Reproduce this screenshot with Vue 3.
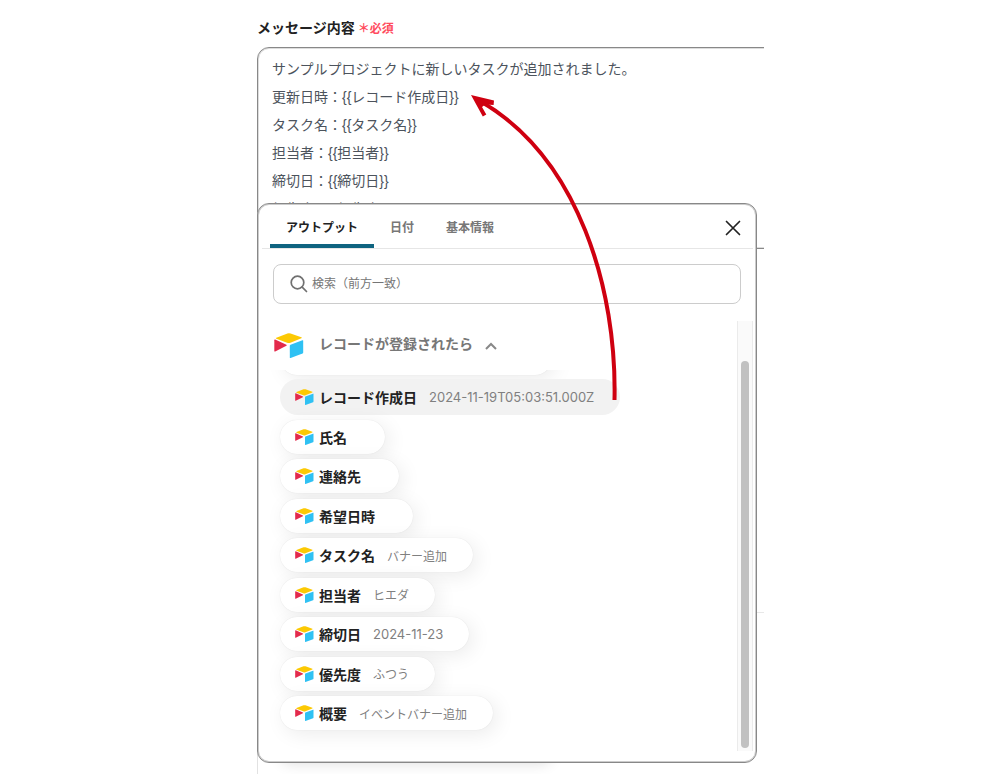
<script setup>
import { ref } from 'vue'

const message = ref(
  [
    'サンプルプロジェクトに新しいタスクが追加されました。',
    '更新日時：{{レコード作成日}}',
    'タスク名：{{タスク名}}',
    '担当者：{{担当者}}',
    '締切日：{{締切日}}',
    '優先度：{{優先度}}',
  ].join('\n'),
)
const keyword = ref('')
const tabs = ['アウトプット', '日付', '基本情報']
const activeTab = ref('アウトプット')
const fields = [
  { name: 'レコード作成日', value: '2024-11-19T05:03:51.000Z', date: true, active: true },
  { name: '氏名', value: '' },
  { name: '連絡先', value: '' },
  { name: '希望日時', value: '' },
  { name: 'タスク名', value: 'バナー追加' },
  { name: '担当者', value: 'ヒエダ' },
  { name: '締切日', value: '2024-11-23', date: true },
  { name: '優先度', value: 'ふつう' },
  { name: '概要', value: 'イベントバナー追加' },
]
</script>

<template>
  <main class="page">
    <svg class="symbols" aria-hidden="true">
      <symbol id="cube" viewBox="0 0 30 25">
        <path fill="#fcc903" d="M13.4.4q1.600-.5 3.200 0L27.300 4.300q1 .5 0 1L16.500 9.800q-1.700.6-3.400 0L2.400 5.700q-1-.5 0-1z" />
        <path fill="#2fc1f3" d="M15.800 12.800q0-.8.700-1.100L28.400 7.200q.800-.2.800.6V19.500q0 .8-.7 1.100L16.600 25q-.800.2-.800-.6z" />
        <path fill="#e32a4c" d="M.3 7.200q0-1 .9-.6L12.400 11.700q.8.500 0 1L1.200 18.500q-.9.400-.9-.6z" />
      </symbol>
    </svg>

    <section class="form">
      <label class="label" for="message">メッセージ内容<span class="required">＊必須</span></label>
      <div class="clip">
        <textarea id="message" v-model="message" class="message"></textarea>
      </div>
      <div class="next" aria-hidden="true">
        <div class="next-top"></div>
        <div class="next-rest"><div class="next-chip"></div></div>
      </div>

      <div class="panel">
        <header class="head">
          <nav class="tabs">
            <button
              v-for="tab in tabs"
              :key="tab"
              type="button"
              class="tab"
              :class="{ current: tab === activeTab }"
              @click="activeTab = tab"
            >{{ tab }}</button>
          </nav>
          <button type="button" class="close" aria-label="閉じる">
            <svg width="16" height="16" viewBox="0 0 16 16" fill="none" stroke="#222" stroke-width="1.700" stroke-linecap="round">
              <path d="M1.500 1.500 14.500 14.500M14.500 1.500 1.500 14.500" />
            </svg>
          </button>
        </header>

        <div class="search">
          <svg width="18" height="18" viewBox="0 0 18 18" fill="none" stroke="#707070" stroke-width="1.700" stroke-linecap="round">
            <circle cx="7.500" cy="7.500" r="6.300" />
            <path d="m12.200 12.200 4.300 4.300" />
          </svg>
          <input v-model="keyword" type="text" placeholder="検索（前方一致）" aria-label="検索（前方一致）" />
        </div>

        <div class="body">
          <div class="group">
            <button type="button" class="group-head">
              <svg class="logo"><use href="#cube" /></svg>
              <span class="group-name">レコードが登録されたら</span>
              <svg class="chevron" width="12" height="8" viewBox="0 0 12 8" fill="none" stroke="#888" stroke-width="2">
                <path d="M1 7 6 2l5 5" />
              </svg>
            </button>
            <div class="scroll">
              <ul class="list">
                <li><div class="chip passed"></div></li>
                <li v-for="field in fields" :key="field.name">
                  <button type="button" class="chip" :class="{ active: field.active }">
                    <svg class="icon"><use href="#cube" /></svg>
                    <span class="name">{{ field.name }}</span>
                    <span class="value" :class="{ date: field.date }">{{ field.value }}</span>
                  </button>
                </li>
              </ul>
            </div>
          </div>
          <div class="track" aria-hidden="true"><div class="thumb"></div></div>
        </div>
      </div>

      <svg class="arrow" width="160" height="320" viewBox="465 90 160 320" aria-hidden="true">
        <path d="M614.500 400C617 290 579 158 480 101" fill="none" stroke="#cf0010" stroke-width="4" />
        <path d="M471 95 494 100.500 493.600 105 485 104.600 482 107 486.300 114.500 482.800 116.500z" fill="#cf0010" />
      </svg>
    </section>
  </main>
</template>

<style>
body {
  margin: 0;
  background: #fff;
}
</style>

<style scoped>
.page {
  box-sizing: border-box;
  min-height: 100vh;
  padding: 0 236px 0 257px;
  display: flex;
  overflow: hidden;
  font-family: 'Liberation Sans', 'Noto Sans CJK JP', sans-serif;
  color: #222;
}
.symbols {
  position: absolute;
  width: 0;
  height: 0;
}
button,
input,
textarea {
  font-family: inherit;
  margin: 0;
}
button {
  border: 0;
  padding: 0;
  background: none;
  color: inherit;
  cursor: pointer;
}
.form {
  position: relative;
  flex: 1;
  min-width: 0;
  display: flex;
  flex-direction: column;
  padding-top: 17px;
}
.label {
  display: flex;
  align-items: center;
  height: 20px;
  margin-bottom: 10px;
  font-size: 14px;
  font-weight: 700;
}
.required {
  margin-left: 3px;
  font-size: 12px;
  color: #ff4c5e;
}
.clip {
  overflow: hidden;
}
.message {
  display: block;
  box-sizing: border-box;
  width: calc(100% + 20px);
  height: 202px;
  padding: 7px 14px;
  border: 1px solid #888;
  border-radius: 12px;
  box-shadow: inset 0 0 0 1px #ddd;
  background: #fff;
  color: #4c535c;
  font-size: 14px;
  line-height: 28px;
  resize: none;
  overflow: hidden;
  outline: 0;
}
.next {
  flex: 1;
  display: flex;
  flex-direction: column;
  margin-top: 18px;
  border-left: 1px solid #e2e2e2;
}
.next-top {
  height: 345px;
  border-bottom: 1px solid #e8e8e8;
}
.next-rest {
  flex: 1;
  display: flex;
  align-items: flex-end;
}
.next-chip {
  width: 272px;
  height: 20px;
  margin: 0 0 14px 22px;
  border-radius: 10px;
  box-shadow: 0 4px 14px rgba(0, 0, 0, 0.12);
}
.panel {
  position: absolute;
  top: 203px;
  left: 0;
  right: 7px;
  border: 1px solid #888;
  border-radius: 12px;
  box-shadow: inset 0 0 0 1px #ccc;
  background: #fff;
}
.head {
  display: flex;
  align-items: center;
  justify-content: space-between;
  height: 44px;
  margin: 0 3px 0 4px;
  padding: 0 8px;
  border-bottom: 1px solid #e6e6e6;
}
.tabs {
  display: flex;
  align-self: stretch;
}
.tab {
  box-sizing: border-box;
  padding: 4px 16px 0;
  border-bottom: 4px solid transparent;
  color: #777;
  font-size: 12px;
  font-weight: 700;
}
.tab.current {
  color: #222;
  background: linear-gradient(#0f6480, #0f6480) bottom / 100% 4px no-repeat;
  background-origin: border-box;
  border-radius: 4px 4px 0 0;
}
.close {
  display: flex;
  padding: 4px;
  margin-top: 3px;
}
.search {
  display: flex;
  align-items: center;
  gap: 4px;
  box-sizing: border-box;
  height: 40px;
  margin: 15px 15px 17px 15px;
  padding: 0 16px;
  border: 1px solid #ccc;
  border-radius: 8px;
}
.search input {
  flex: 1;
  min-width: 0;
  padding: 0;
  border: 0;
  outline: 0;
  background: none;
  color: #333;
  font-size: 12px;
}
.search input::placeholder {
  color: #757575;
  opacity: 1;
}
.body {
  display: flex;
  margin: 0 3px 11px 11px;
}
.group {
  flex: 1;
  min-width: 0;
}
.group-head {
  display: flex;
  align-items: center;
  height: 49px;
  padding-left: 5px;
  color: #777;
  font-size: 14px;
  font-weight: 700;
}
.logo {
  width: 30px;
  height: 25px;
  margin-right: 15px;
}
.group-name {
  padding-bottom: 6px;
}
.chevron {
  margin-left: 12px;
}
.scroll {
  overflow: hidden;
  padding: 0 10px 18px 11px;
}
.list {
  display: grid;
  grid-auto-rows: 1fr;
  align-items: center;
  min-height: 395px;
  margin: -32px 0 0;
  padding: 0;
  list-style: none;
}
.chip {
  display: flex;
  align-items: center;
  box-sizing: border-box;
  width: max-content;
  height: 34px;
  padding: 0 26px 0 15px;
  border-radius: 18px;
  background: #fff;
  box-shadow: 0 0 1px rgba(0, 0, 0, 0.12), 4px 4px 20px rgba(0, 0, 0, 0.08);
}
.passed {
  width: 272px;
}
.active {
  height: 36px;
  background: #f2f2f2;
  box-shadow: none;
}
.icon {
  width: 19px;
  height: 16px;
  margin-right: 5px;
}
.name {
  font-size: 14px;
  font-weight: 700;
}
.value {
  margin-left: 12px;
  color: #808080;
  font-size: 12px;
}
.date {
  font-family: Inter, 'Noto Sans CJK JP', sans-serif;
  font-size: 13px;
}
.track {
  box-sizing: border-box;
  width: 16px;
  padding: 40px 3px 3px;
  display: flex;
  border: solid #ebebeb;
  border-width: 0 1px;
  background: #fafafa;
}
.thumb {
  flex: 1;
  border-radius: 5px;
  background: #c1c1c1;
}
.arrow {
  position: absolute;
  top: 90px;
  left: 208px;
  pointer-events: none;
}
</style>
